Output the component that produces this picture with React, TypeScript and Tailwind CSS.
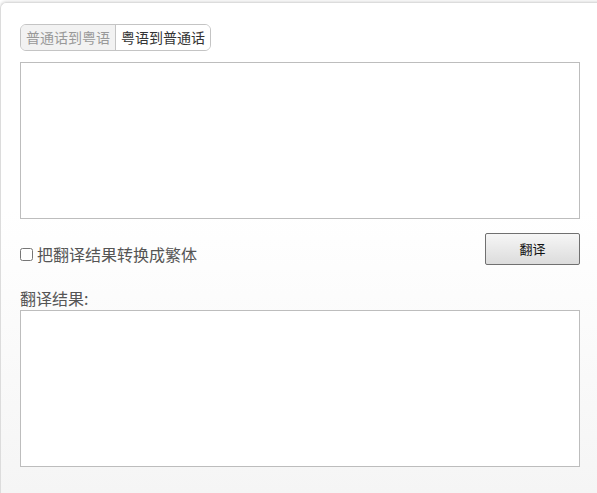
import React, { useState } from 'react';

const font = { fontFamily: '"Noto Sans CJK SC", "Noto Sans", sans-serif' };

const App: React.FC = () => {
  const [mode, setMode] = useState<'m2c' | 'c2m'>('m2c');
  const [traditional, setTraditional] = useState(false);

  return (
    <div className="w-[597px] h-[493px] overflow-hidden bg-white pt-[2px]" style={font}>
      <div className="w-[620px] h-[520px] rounded-tl-[6px] border-t border-l border-[#dcdcdc] shadow-[0_-1px_3px_rgba(0,0,0,0.12)] bg-gradient-to-b from-white from-40% to-[#f4f4f4] pl-[19px] pt-[21px]">
        {/* Tabs */}
        <div className="flex w-fit h-[27px] rounded-[6px] border border-[#c4c4c4] overflow-hidden text-[14px] leading-[25px]">
          <button
            onClick={() => setMode('m2c')}
            className={`px-[5px] border-r border-[#c4c4c4] ${mode === 'm2c' ? 'bg-[#f2f2f2] text-[#999]' : 'bg-white text-[#333]'}`}
          >
            普通话到粤语
          </button>
          <button
            onClick={() => setMode('c2m')}
            className={`px-[5px] ${mode === 'c2m' ? 'bg-[#f2f2f2] text-[#999]' : 'bg-white text-[#333]'}`}
          >
            粤语到普通话
          </button>
        </div>

        {/* Input */}
        <textarea className="block mt-[11px] w-[560px] h-[157px] border border-[#bdbdbd] bg-white resize-none outline-none" />

        {/* Options + submit */}
        <div className="flex items-end justify-between w-[560px] mt-[14px]">
          <label className="flex items-center text-[16px] leading-[20px] text-[#555] mb-[1px]">
            <input
              type="checkbox"
              checked={traditional}
              onChange={(e) => setTraditional(e.target.checked)}
              className="m-0 mr-[4px] w-[13px] h-[13px]"
            />
            把翻译结果转换成繁体
          </label>
          <button className="w-[95px] h-[32px] border border-[#707070] rounded-[2px] bg-gradient-to-b from-[#f6f6f6] to-[#dcdcdc] text-[13px] font-normal text-[#111]">
            翻译
          </button>
        </div>

        {/* Result */}
        <div className="mt-[23px] text-[16px] leading-[20px] text-[#555]">翻译结果:</div>
        <textarea className="block mt-[2px] w-[560px] h-[157px] border border-[#bdbdbd] bg-white resize-none outline-none" />
      </div>
    </div>
  );
};

export default App;
